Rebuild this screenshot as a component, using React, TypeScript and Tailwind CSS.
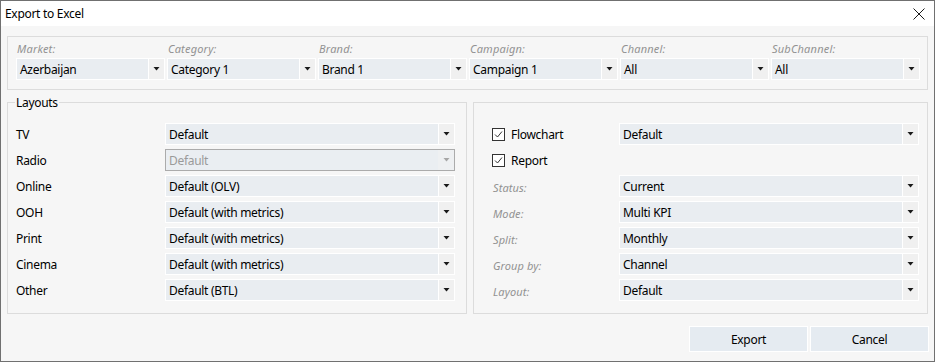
import React from "react";

const topFields = [
  { label: "Market:", value: "Azerbaijan" },
  { label: "Category:", value: "Category 1" },
  { label: "Brand:", value: "Brand 1" },
  { label: "Campaign:", value: "Campaign 1" },
  { label: "Channel:", value: "All" },
  { label: "SubChannel:", value: "All" },
];

const layouts = [
  { label: "TV", value: "Default" },
  { label: "Radio", value: "Default", disabled: true },
  { label: "Online", value: "Default (OLV)" },
  { label: "OOH", value: "Default (with metrics)" },
  { label: "Print", value: "Default (with metrics)" },
  { label: "Cinema", value: "Default (with metrics)" },
  { label: "Other", value: "Default (BTL)" },
];

const reportFields = [
  { label: "Status:", value: "Current" },
  { label: "Mode:", value: "Multi KPI" },
  { label: "Split:", value: "Monthly" },
  { label: "Group by:", value: "Channel" },
  { label: "Layout:", value: "Default" },
];

function Arrow({ disabled }: { disabled?: boolean }) {
  return (
    <svg width="7" height="4" viewBox="0 0 7 4">
      <polygon points="0.5,0 6.5,0 3.5,3.5" fill={disabled ? "#a6a6a6" : "#1a1a1a"} />
    </svg>
  );
}

function Combo({ value, disabled }: { value: string; disabled?: boolean }) {
  if (disabled) {
    return (
      <div className="flex h-[22px] border border-[#ababab] bg-[#eaeef2]">
        <div className="flex flex-1 items-center pl-[3px] pt-[2px] text-[#9a9a9a]">{value}</div>
        <div className="flex w-[16px] items-center justify-center bg-[#eef0f2]">
          <Arrow disabled />
        </div>
      </div>
    );
  }
  return (
    <div className="flex h-[22px] border border-white">
      <div className="flex flex-1 items-center bg-[#e9edf1] pl-[3px] pt-[2px]">{value}</div>
      <div className="flex w-[16px] items-center justify-center border-l border-white bg-[#f0f0f0]">
        <Arrow />
      </div>
    </div>
  );
}

function Check() {
  return (
    <div className="flex h-[13px] w-[13px] items-center justify-center border border-[#333333] bg-white">
      <svg width="11" height="11" viewBox="0 0 11 11">
        <polyline points="2,5.5 4.5,8 9,2.5" fill="none" stroke="#333333" strokeWidth="1" />
      </svg>
    </div>
  );
}

export default function App() {
  return (
    <div className="flex h-[362px] w-[935px] flex-col border border-[#707070] bg-[#f6f6f6] font-['Noto_Sans',sans-serif] text-[12px] tracking-[-0.3px] text-black">
      <div className="flex h-[25px] items-center justify-between bg-white pl-[4px] pr-[9px] pt-[1px]">
        <span>Export to Excel</span>
        <svg width="12" height="12" viewBox="0 0 12 12">
          <path d="M0.5 0.5 L11.5 11.5 M11.5 0.5 L0.5 11.5" stroke="#1a1a1a" strokeWidth="1" />
        </svg>
      </div>

      <div className="flex flex-1 flex-col pl-[6px] pr-[6px] pt-[10px]">
        <div className="h-[54px] border border-[#dcdcdc] pl-[8px] pt-[5px]">
          <div className="grid grid-cols-[repeat(6,149px)] gap-x-[2px]">
            {topFields.map((f) => (
              <div key={f.label} className="flex flex-col">
                <div className="mb-[2px] h-[14px] pl-[1px] text-[11px] leading-[14px] italic tracking-[0.2px] text-[#929292]">
                  {f.label}
                </div>
                <Combo value={f.value} />
              </div>
            ))}
          </div>
        </div>

        <div className="mt-[12px] flex h-[212px] gap-[6px]">
          <div className="relative w-[460px] border border-[#dcdcdc] pl-[8px] pt-[20px]">
            <span className="absolute left-[7px] top-[-8px] bg-[#f6f6f6] px-[1px] leading-[16px]">Layouts</span>
            <div className="grid grid-cols-[149px_290px] gap-y-[4px]">
              {layouts.map((r) => (
                <React.Fragment key={r.label}>
                  <div className="flex h-[22px] items-center pt-[1px]">{r.label}</div>
                  <Combo value={r.value} disabled={r.disabled} />
                </React.Fragment>
              ))}
            </div>
          </div>

          <div className="flex-1 border border-[#dcdcdc] pl-[18px] pt-[20px]">
            <div className="grid grid-cols-[127px_300px] gap-y-[4px]">
              <div className="flex h-[22px] items-center gap-[6px]">
                <Check />
                <span className="pt-[1px]">Flowchart</span>
              </div>
              <Combo value="Default" />
              <div className="col-span-2 flex h-[22px] items-center gap-[6px]">
                <Check />
                <span className="pt-[1px]">Report</span>
              </div>
              {reportFields.map((r) => (
                <React.Fragment key={r.label}>
                  <div className="flex h-[22px] items-center pl-[1px] pt-[4px] text-[11px] italic tracking-[0.1px] text-[#929292]">
                    {r.label}
                  </div>
                  <Combo value={r.value} />
                </React.Fragment>
              ))}
            </div>
          </div>
        </div>

        <div className="mr-[-1px] mt-[12px] flex justify-end gap-[2px]">
          <button className="h-[26px] w-[119px] border border-white bg-[#e5ebf1] pt-[1px]">Export</button>
          <button className="h-[26px] w-[119px] border border-white bg-[#e5ebf1] pt-[1px]">Cancel</button>
        </div>
      </div>
    </div>
  );
}
